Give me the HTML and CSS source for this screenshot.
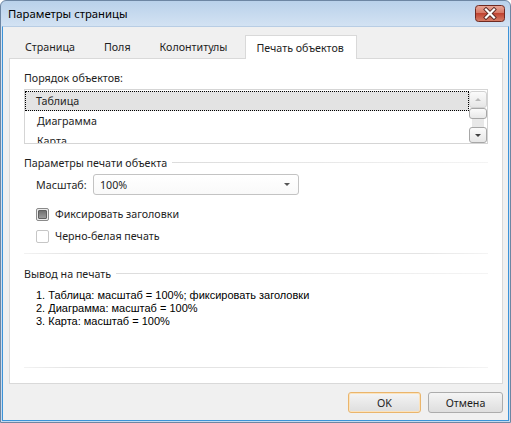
FILE: index.html
```html
<!DOCTYPE html>
<html lang="ru">
<head>
<meta charset="utf-8">
<title>Параметры страницы</title>
<link rel="stylesheet" href="styles.css">
</head>
<body>
<div class="window">
  <div class="titlebar">
    <span class="title">Параметры страницы</span>
    <div class="close">
      <svg width="30" height="17" viewBox="0 0 30 17">
        <defs>
          <linearGradient id="cg" x1="0" y1="0" x2="0" y2="1">
            <stop offset="0" stop-color="#e9a898"/>
            <stop offset="0.45" stop-color="#d77a68"/>
            <stop offset="0.5" stop-color="#c04432"/>
            <stop offset="1" stop-color="#d7806a"/>
          </linearGradient>
        </defs>
        <rect x="0.5" y="0.5" width="29" height="16" rx="3" fill="url(#cg)" stroke="#6e2a22"/>
        <path d="M11 4.5 L19 12.5 M19 4.5 L11 12.5" stroke="#5a2a24" stroke-width="4" stroke-linecap="square"/>
        <path d="M11 4.5 L19 12.5 M19 4.5 L11 12.5" stroke="#ffffff" stroke-width="2.2" stroke-linecap="square"/>
      </svg>
    </div>
  </div>
  <div class="client">
    <div class="tabs">
      <div class="tab">Страница</div>
      <div class="tab">Поля</div>
      <div class="tab">Колонтитулы</div>
      <div class="tab active">Печать объектов</div>
    </div>
    <div class="panel">
      <div class="label">Порядок объектов:</div>
      <div class="listbox">
        <div class="items">
          <div class="item selected">Таблица</div>
          <div class="item">Диаграмма</div>
          <div class="item">Карта</div>
        </div>
        <div class="scrollbar">
          <div class="sbtn up"><span class="arrow-up"></span></div>
          <div class="thumb"></div>
          <div class="track"></div>
          <div class="sbtn down"><span class="arrow-down"></span></div>
        </div>
      </div>

      <div class="group-head group-head-params"><span>Параметры печати объекта</span><i class="hline"></i></div>
      <div class="combo-row">
        <span class="combo-label">Масштаб:</span>
        <div class="combo"><span>100%</span><span class="combo-arrow"></span></div>
      </div>
      <div class="check-row first">
        <span class="checkbox checked"></span><span>Фиксировать заголовки</span>
      </div>
      <div class="check-row second">
        <span class="checkbox"></span><span>Черно-белая печать</span>
      </div>
      <div class="separator"></div>

      <div class="group-head group-head-output"><span>Вывод на печать</span><i class="hline"></i></div>
      <div class="output">
        <div>1. Таблица: масштаб = 100%; фиксировать заголовки</div>
        <div>2. Диаграмма: масштаб = 100%</div>
        <div>3. Карта: масштаб = 100%</div>
      </div>
      <div class="separator bottom"></div>
    </div>
    <div class="footer">
      <button class="btn ok">OK</button>
      <button class="btn cancel">Отмена</button>
    </div>
  </div>
</div>
</body>
</html>
```

FILE: styles.css
```css
* { box-sizing: border-box; }

body {
  margin: 0;
  font-family: "Noto Sans", "Open Sans", sans-serif;
  font-size: 10.7px;
  color: #1e1e1e;
  background: #ffffff;
}

.window {
  width: 511px;
  height: 423px;
  display: flex;
  flex-direction: column;
  background: linear-gradient(#b9d1ea, #d4e3f3 26px, #c6daee);
  border: 1px solid #6d86a3;
  border-radius: 6px 6px 0 0;
  padding: 0 1px 1px 1px;
  overflow: hidden;
}

.titlebar {
  height: 25px;
  display: flex;
  align-items: center;
  justify-content: space-between;
  padding: 0 4px 0 6px;
}

.title {
  color: #000;
  font-size: 11.3px;
}

.close {
  width: 30px;
  height: 17px;
  align-self: flex-start;
  margin-top: 4px;
}
.close svg { display: block; }

.client {
  flex: 1;
  display: flex;
  flex-direction: column;
  background: #f0f0f0;
  border: 1px solid #3c93d8;
  border-top: 1px solid #b8cde4;
  padding: 0 5px 0 6px;
}

/* Tabs */
.tabs {
  display: flex;
  height: 23px;
  margin-top: 8px;
}

.tab {
  display: flex;
  align-items: center;
  padding: 0 13px 0 16px;
  color: #1e1e1e;
}

.tab.active {
  position: relative;
  z-index: 1;
  background: #ffffff;
  border: 1px solid #d9d9d9;
  border-bottom: none;
  height: 24px;
  padding: 0 12px 0 10px;
  margin-left: 5px;
}

/* Panel */
.panel {
  height: 326px;
  background: #ffffff;
  border: 1px solid #d9d9d9;
  padding: 11px 14px 0 14px;
}

.label {
  line-height: 16px;
  height: 16px;
}

.listbox {
  margin-top: 3px;
  height: 55px;
  border: 1px solid #d5d5d5;
  display: flex;
  overflow: hidden;
}

.items {
  flex: 1;
  padding-top: 1px;
}

.item {
  height: 20px;
  line-height: 18px;
  padding-left: 11px;
  border: 1px solid transparent;
  color: #1e1e1e;
}

.item.selected {
  background: #e3e3e3;
  border: 1px dotted #000;
  padding-left: 10px;
}

.scrollbar {
  width: 18px;
  display: flex;
  flex-direction: column;
  padding-top: 1px;
}

.sbtn {
  display: flex;
  align-items: center;
  justify-content: center;
  border: 1px solid #a7a7a7;
  border-radius: 3px;
  background: linear-gradient(#fbfbfb, #e6e6e6);
}

.sbtn.up {
  height: 17px;
  border-color: #d2d2d2;
}

.sbtn.down {
  height: 16px;
}

.thumb {
  height: 11px;
  border: 1px solid #a7a7a7;
  border-radius: 3px;
  background: linear-gradient(#fbfbfb, #e8e8e8);
}

.track {
  flex: 1;
  margin: 0 3px;
  background: #e8e8e8;
}

.arrow-up {
  width: 0; height: 0;
  border-left: 3px solid transparent;
  border-right: 3px solid transparent;
  border-bottom: 3px solid #b9b9b9;
}

.arrow-down {
  width: 0; height: 0;
  border-left: 3px solid transparent;
  border-right: 3px solid transparent;
  border-top: 3px solid #404040;
}

/* Group headers */
.group-head {
  display: flex;
  align-items: center;
  line-height: 16px;
  height: 16px;
}

.group-head-params { margin-top: 11px; }
.group-head-output { margin-top: 12px; }

.hline {
  flex: 1;
  height: 1px;
  margin-left: 5px;
  margin-top: -1px;
  background: linear-gradient(to right, #dcdcdc, #ebebeb 60%, #f4f4f4);
}

/* Combo */
.combo-row {
  margin-top: 3px;
  display: flex;
  align-items: center;
  padding-left: 12px;
}

.combo-label {
  width: 57px;
}

.combo {
  width: 206px;
  height: 21px;
  border: 1px solid #c3c3c3;
  border-radius: 3px;
  background: linear-gradient(#ffffff, #f9f9f9);
  display: flex;
  align-items: center;
  justify-content: space-between;
  padding: 0 8px 0 6px;
}

.combo-arrow {
  width: 0; height: 0;
  border-left: 3px solid transparent;
  border-right: 3px solid transparent;
  border-top: 3px solid #555;
}

/* Checkboxes */
.check-row {
  display: flex;
  align-items: center;
  height: 16px;
  padding-left: 12px;
  gap: 6px;
}

.check-row.first { margin-top: 11px; }
.check-row.second { margin-top: 6px; }

.checkbox {
  width: 13px;
  height: 13px;
  border: 1px solid #8f8f8f;
  border-radius: 2px;
  background: linear-gradient(#f0f0f0, #ffffff);
  display: flex;
  align-items: center;
  justify-content: center;
}

.checkbox.checked {
  border-color: #8a8a8a;
  background: #ececec;
}

.checkbox.checked::after {
  content: "";
  width: 7px;
  height: 7px;
  border-radius: 1px;
  background: linear-gradient(#707070, #9c9c9c);
  border: 1px solid #606060;
}

.check-row.second .checkbox {
  border-color: #c6c6c6;
  background: #ffffff;
}

/* Separators */
.separator {
  height: 1px;
  margin-top: 9px;
  background: linear-gradient(to right, #f2f2f2, #e4e4e4 10%, #e4e4e4 85%, #f4f4f4);
}

.separator.bottom {
  margin-top: 39px;
}

/* Output */
.output {
  margin-top: 7px;
  padding-left: 12px;
  font-family: "Liberation Sans", Arial, sans-serif;
  font-size: 11px;
  line-height: 13px;
  color: #000;
}

/* Footer */
.footer {
  display: flex;
  justify-content: flex-end;
  gap: 7px;
  padding-top: 8px;
}

.btn {
  height: 21px;
  font-family: "Noto Sans", "Open Sans", sans-serif;
  font-size: 10.7px;
  color: #1e1e1e;
  border-radius: 3px;
  padding: 0;
  background: linear-gradient(#f5f5f5, #e9e9e9 50%, #dedede);
}

.btn.ok {
  width: 73px;
  border: 1px solid #eab56c;
  box-shadow: inset 0 0 0 1px #fbe3bd;
}

.btn.cancel {
  width: 75px;
  border: 1px solid #acacac;
}
```
